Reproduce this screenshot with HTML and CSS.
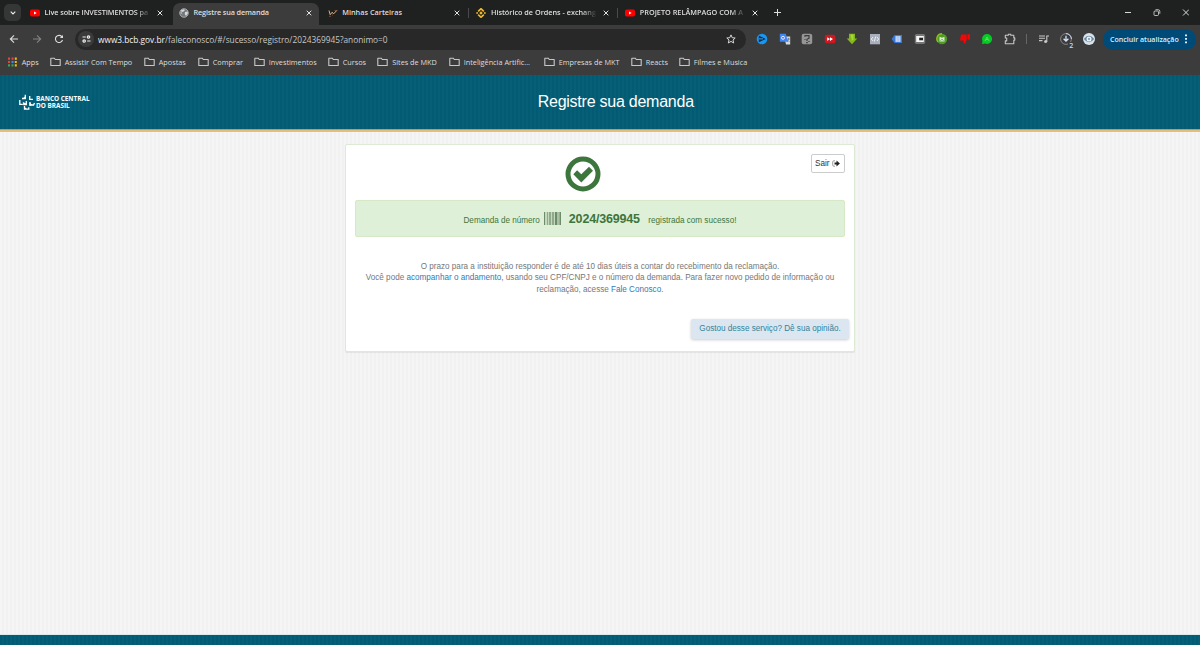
FILE: index.html
```html
<!DOCTYPE html>
<html lang="pt-BR">
<head>
<meta charset="utf-8">
<title>Registre sua demanda</title>
<link rel="stylesheet" href="styles.css">
</head>
<body>
<svg width="0" height="0" class="defs">
  <symbol id="folder" viewBox="0 0 11 10"><path d="M.8 1.2h3.400l1.100 1.300h4.900v6H.8z" fill="none" stroke="#c7c7c7" stroke-width="1.100" stroke-linejoin="round"/></symbol>
  <symbol id="yt" viewBox="0 0 10 8"><rect y=".5" width="10" height="7" rx="1.8" fill="#f00"/><path d="M4 2.5v3L6.700 4z" fill="#fff"/></symbol>
  <symbol id="close" viewBox="0 0 6 6"><path d="M.7.7l4.600 4.600M5.300.7L.7 5.300" stroke="#e3e3e3" stroke-width="1"/></symbol>
</svg>
<div class="tabs">
  <div class="tab-menu"><svg width="6" height="4" viewBox="0 0 6 4"><path d="M.7.7L3 3 5.300.7" fill="none" stroke="#eee" stroke-width="1.100"/></svg></div>
  <div class="tab"><svg class="fav" height="8"><use href="#yt"/></svg><span class="title fade"><b class="t1">Live sobre INVESTIMENTOS pa</b></span><svg class="x"><use href="#close"/></svg></div>
  <div class="tab active"><svg class="fav" viewBox="0 0 10 10"><circle cx="5" cy="5" r="4.3" fill="#73777a" stroke="#b8bec1" stroke-width=".8"/><path d="M2 2.200l3-1 .8 1.300-1.300 1L3 4 1 5l1.700.5.8 1.600zM6 4l2.800-.5v2L7 8 5.700 6z" fill="#d5dadd"/></svg><span class="title"><b class="t2">Registre sua demanda</b></span><svg class="x"><use href="#close"/></svg></div>
  <div class="tab"><svg class="fav" viewBox="0 0 10 10"><path d="M1 2.500l1.200 4.200 2-2.500 1.300 1.700L9 2.300" fill="none" stroke="#d8b484" stroke-width="1"/><path d="M1 8.300h2M4 7h1M6.500 2.500H9" stroke="#9b5941" stroke-width=".7"/></svg><span class="title"><b class="t3">Minhas Carteiras</b></span><svg class="x"><use href="#close"/></svg></div>
  <div class="tab line"><svg class="fav" viewBox="0 0 10 10"><path d="M2.200 3.400L5 .7l2.800 2.700M2.200 6.600L5 9.300l2.800-2.700" fill="none" stroke="#f3ba2f" stroke-width="1.600"/><path d="M5 3.300L6.700 5 5 6.700 3.300 5zM1.100 3.800l1.200 1.200-1.200 1.200L0 5zM8.900 3.800L10 5 8.900 6.200 7.700 5z" fill="#f3ba2f"/></svg><span class="title fade"><b class="t4">Histórico de Ordens - exchang</b></span><svg class="x"><use href="#close"/></svg></div>
  <div class="tab line"><svg class="fav" height="8"><use href="#yt"/></svg><span class="title fade"><b class="t5">PROJETO RELÂMPAGO COM A</b></span><svg class="x"><use href="#close"/></svg></div>
  <div class="new"><svg width="7" height="7" viewBox="0 0 7 7"><path d="M3.500 0v7M0 3.500h7" stroke="#ddd"/></svg></div>
  <div class="win"><svg width="64" height="9" viewBox="0 0 64 9"><path d="M0 4.500h6M58 1.500l6 6M64 1.500l-6 6" stroke="#eee" stroke-width=".9"/><rect x="29" y="3" width="4.500" height="4.500" rx="1" fill="none" stroke="#ddd" stroke-width=".8"/><path d="M30.500 1.700h2.700q1.600 0 1.600 1.600v2.500" fill="none" stroke="#ddd" stroke-width=".8"/></svg></div>
</div>
<div class="toolbar">
  <div class="nav"><svg width="10" height="10" viewBox="0 0 10 10"><path d="M9 5H1.500M5 1.300L1.300 5 5 8.700" fill="none" stroke="#dcdcdc" stroke-width="1.100"/></svg></div>
  <div class="nav"><svg width="10" height="10" viewBox="0 0 10 10"><path d="M1 5h7.500M5 1.300L8.700 5 5 8.700" fill="none" stroke="#838383" stroke-width="1.100"/></svg></div>
  <div class="nav"><svg width="10" height="10" viewBox="0 0 10 10"><path d="M8.500 6A3.600 3.600 0 1 1 7.800 2.600L8.600 3.500" fill="none" stroke="#ddd" stroke-width="1.100"/><path d="M9 .9v3.200H5.800z" fill="#ddd"/></svg></div>
  <div class="address">
    <span class="site"><svg width="9" height="8" viewBox="0 0 9 8"><path d="M.5 2h3.300M5.200 6h3.300" stroke="#eee" stroke-width="1.200"/><circle cx="6.500" cy="2" r="1.200" fill="none" stroke="#eee" stroke-width="1.200"/><circle cx="2.200" cy="6" r="1.200" fill="none" stroke="#eee" stroke-width="1.200"/></svg></span>
    <span class="url"><span class="host">www3.bcb.gov.br</span>/faleconosco/#/sucesso/registro/2024369945?anonimo=0</span>
    <svg class="star" width="10" height="10" viewBox="0 0 10 10"><path d="M5 .9l1.200 2.800 3 .3L7 6l.7 3L5 7.400 2.300 9 3 6 .8 4l3-.3z" fill="none" stroke="#ddd" stroke-width=".95"/></svg>
  </div>
  <div class="exts">
    <svg viewBox="0 0 12 12"><circle cx="6" cy="6" r="5.300" fill="#1796f3"/><path d="M2.800 2.700l6.900 3.200-6.900 3.300z" fill="#10283e"/><path d="M3 5.900h4" stroke="#3fa9f5" stroke-width="1"/></svg>
    <svg viewBox="0 0 12 12"><path d="M5 3.500h6.200v8H7z" fill="#d3d7de"/><path d="M.8.8h6l2 8h-8z" fill="#4285f4"/><path d="M8 6h3M9.500 5v1L8 9M8.500 7l2 2" stroke="#657b92" stroke-width=".7"/><circle cx="4" cy="4.800" r="1.500" fill="none" stroke="#e6edff"/></svg>
    <svg viewBox="0 0 12 12"><rect x=".7" y=".7" width="10.500" height="10.500" rx="2" fill="#969696"/><path d="M4 3.800V2.600h4v2.600L6 6.300V8M5.200 9.700h1.600M3.500 6.500h1M8 8v1" stroke="#3b3b3b" fill="none" stroke-width="1.200"/></svg>
    <svg viewBox="0 0 12 12"><rect x=".8" y="1.800" width="10.600" height="8.400" rx="2" fill="#cf1720"/><path d="M3.200 4.200L6 6 3.200 7.900zM6 4.200L9 6 6 7.900z" fill="#fff"/></svg>
    <svg viewBox="0 0 12 12"><path d="M3 .8h6v4.800h2.300L6 11.200.7 5.600H3z" fill="#83b81a"/><path d="M4.500 1.500h3v4.800L6 8z" fill="#a7d734"/></svg>
    <svg viewBox="0 0 12 12"><path d="M1 1h10v10.300H1z" fill="#a9afbd"/><path d="M4 4L2.300 6 4 8M8 4l1.700 2L8 8M6.700 3.500l-1.400 5" fill="none" stroke="#f6f6fa" stroke-width=".9"/></svg>
    <svg viewBox="0 0 12 12"><path d="M.7 6L3.500 2H11v8H3.500z" fill="#3979db"/><path d="M4.500 3.200h5v5.600h-5z" fill="#d5e4fb"/><path d="M4.500 5h5M4.500 7h5M7 3.200v5.600" stroke="#7ba4e6" stroke-width=".5"/></svg>
    <svg viewBox="0 0 12 12"><rect x=".8" y="1" width="10.400" height="10" rx="1.800" fill="#777"/><rect x="2.200" y="3" width="7.600" height="6" fill="#f6f6f6"/><rect x="5.200" y="4.700" width="3.800" height="2.600" fill="#222"/></svg>
    <svg viewBox="0 0 12 12"><circle cx="6" cy="6" r="5.200" fill="#509b23"/><path d="M2 9A5 5 0 0 1 6 .8" stroke="#8fbb28" fill="none" stroke-width="1.400"/><path d="M3.500 3.700L6 4.800l2.500-1.100v4.800h-5z" fill="#d7ebce"/><path d="M4.500 7.700Q6 4.700 7.500 7.700" stroke="#509b23" fill="none" stroke-width=".8"/></svg>
    <svg viewBox="0 0 12 12"><path d="M2 1.500h5.700v5L6 10.800 4.500 10l.2-2.500H.9zM8.500 1.200H11v5.300H8.500z" fill="#f60505"/></svg>
    <svg viewBox="0 0 12 12"><path d="M1 11l.5-3A5 5 0 1 1 4 10.500z" fill="#05cb25"/><path d="M4 8l2-4 2 4M5 6.500h2" fill="none" stroke="#78dd68" stroke-width=".8"/></svg>
    <svg viewBox="0 0 12 12"><path d="M1.300 2.200h3v-1h2.500v1h3v2.700h1v2.200h-1v3.700H1.300V7.900h1.400V5H1.300z" fill="none" stroke="#c5c5c5" stroke-width="1.100" stroke-linejoin="round"/></svg>
  </div>
  <div class="divider"></div>
  <div class="more">
    <svg viewBox="0 0 12 12"><path d="M1 3h6M1 5.300h6M1 7.600h3.500" stroke="#c7c7c7" stroke-width="1.100"/><path d="M8.800 9V3h2.200" fill="none" stroke="#c7c7c7" stroke-width="1.100"/><circle cx="7.600" cy="8.500" r="1.500" fill="#c7c7c7"/></svg>
    <div class="download"><svg viewBox="0 0 12 12"><circle cx="6" cy="6" r="5.400" fill="none" stroke="#858585"/><path d="M6 .6A5.400 5.400 0 0 1 11.400 6" fill="none" stroke="#cbd9f5"/><path d="M6 2.700v5M3.600 5.700L6 8l2.400-2.300" fill="none" stroke="#d5e2ff" stroke-width="1.300"/></svg><b>2</b></div>
    <svg viewBox="0 0 12 12"><circle cx="6" cy="6" r="6" fill="#d8e2eb"/><path d="M.8 6Q6-.5 11.200 6 6 12.500.8 6z" fill="#6888a2"/><circle cx="6" cy="6" r="2.500" fill="#f2f6fa"/><circle cx="6" cy="6" r="1.200" fill="#93a9ba"/></svg>
  </div>
  <div class="update"><span>Concluir atualização</span><svg width="2" height="10" viewBox="0 0 2 10"><path d="M0 .5h2v1.700H0zM0 4h2v1.700H0zM0 7.500h2v1.700H0z" fill="#dcefff"/></svg></div>
</div>
<div class="bookmarks">
  <div class="bm m0"><svg viewBox="0 0 11 10"><path d="M1 .5h2v2.200H1zM1 3.900h2v2.200H1zM4.500.5h2v2.200h-2z" fill="#ea4335"/><path d="M7.800.5h2v2.200h-2zM7.800 3.900h2v2.200h-2zM7.800 7.300h2v2.200h-2z" fill="#fbbc04"/><path d="M4.500 3.900h2v2.200h-2z" fill="#4285f4"/><path d="M1 7.300h2v2.200H1zM4.500 7.300h2v2.200h-2z" fill="#34a853"/></svg><span>Apps</span></div>
  <div class="bm m1"><svg><use href="#folder"/></svg><span>Assistir Com Tempo</span></div>
  <div class="bm m2"><svg><use href="#folder"/></svg><span>Apostas</span></div>
  <div class="bm m3"><svg><use href="#folder"/></svg><span>Comprar</span></div>
  <div class="bm m4"><svg><use href="#folder"/></svg><span>Investimentos</span></div>
  <div class="bm m5"><svg><use href="#folder"/></svg><span>Cursos</span></div>
  <div class="bm m6"><svg><use href="#folder"/></svg><span>Sites de MKD</span></div>
  <div class="bm m7"><svg><use href="#folder"/></svg><span>Inteligência Artific...</span></div>
  <div class="bm m8"><svg><use href="#folder"/></svg><span>Empresas de MKT</span></div>
  <div class="bm m9"><svg><use href="#folder"/></svg><span>Reacts</span></div>
  <div class="bm m10"><svg><use href="#folder"/></svg><span>Filmes e Musica</span></div>
</div>
<header class="header">
  <div class="brand">
    <svg width="16" height="17" viewBox="0 0 16 17"><g fill="none" stroke="#fff" stroke-width="1.300"><path d="M6.300.8v3.700H3M10.700 2v3.300h3.200M.8 6v4.300h3M7.300 7v3.500H4.500M5.500 12v3.200h4.300v-2M11 8v3h3.500l1-2"/></g><path d="M3.500 4.800L6.500 2v3zM3.800 8l3.500 1.500-3 1.700zM10.500 8l2.500 3-2.500 1zM5 12.500l3 2.500H5z" fill="#fff"/></svg>
    <div>BANCO CENTRAL<br>DO BRASIL</div>
  </div>
  <h1>Registre sua demanda</h1>
</header>
<main>
  <section class="card">
    <div class="top">
      <svg class="check" viewBox="0 0 36 36"><circle cx="18" cy="18" r="15" fill="none" stroke="#3c763d" stroke-width="5"/><path d="M8.300 18.200l3.800-3.900 4.200 4 7.700-7.500 4 3.900-11.700 11.900z" fill="#3c763d"/></svg>
      <button class="exit">Sair <svg width="8" height="7" viewBox="0 0 8 7"><path d="M3 .8H1.800Q.7.8.7 2v3q0 1.200 1.100 1.200H3" fill="none" stroke="#888" stroke-width=".8"/><path d="M2.500 2.400h2V.5l3.400 3-3.400 3V4.600h-2z" fill="#222"/></svg></button>
    </div>
    <div class="alert"><span class="a1">Demanda de número</span><svg width="17" height="13" viewBox="0 0 17 13"><path d="M0 0h17v13H0z" fill="#c4d9bd"/><path d="M0 0h1v13H0zM11 0h2v13h-2zM15.500 0H17v13h-1.500z" fill="#6c8c6b"/><path d="M3 0h1v13H3zM5 0h2v13H5zM8 0h2v13H8zM13.500 0h1v13h-1z" fill="#92aa8c"/></svg><strong>2024/369945</strong><span class="a2">registrada com sucesso!</span></div>
    <div class="message"><p class="p1">O prazo para a instituição responder é de até 10 dias úteis a contar do recebimento da reclamação.</p><p class="p2">Você pode <a>acompanhar o andamento</a>, usando seu CPF/CNPJ e o número da demanda. Para fazer novo pedido de informação ou</p><p class="p3">reclamação, acesse <a>Fale Conosco</a>.</p></div>
    <div class="feedback"><span>Gostou desse serviço? Dê sua opinião.</span></div>
  </section>
</main>
<footer></footer>
</body>
</html>
```

FILE: styles.css
```css
* { box-sizing: border-box; }
body { margin: 0; width: 1200px; height: 645px; overflow: hidden; display: flex; flex-direction: column; font-family: "Liberation Sans", Arial, sans-serif; background: #f3f3f3; }
svg { display: block; flex: none; }
.defs { display: none; }
.tabs, .toolbar, .bookmarks { display: flex; align-items: center; flex: none; white-space: nowrap; font-family: "Open Sans", "Noto Sans", sans-serif; font-size: 7.3px; color: #dedede; }
.tabs { height: 25px; background: #1f2020; padding-left: 4px; }
.tab-menu { width: 17px; height: 17px; border-radius: 5px; background: #353636; display: grid; place-items: center; margin-right: 3.6px; }
.tab { width: 148.8px; height: 25px; padding: 0 10.5px 0 5.5px; display: flex; align-items: center; }
.tab.active { background: #3c3c3c; border-radius: 7px 7px 0 0; height: 22px; margin-top: 3px; width: 145.8px; padding-right: 7.5px; padding-bottom: 3px; margin-right: 3px; }
.tab.line { background: linear-gradient(#4a4a4a, #4a4a4a) 0 8px / 1px 10px no-repeat; margin-left: -3px; padding-left: 8.5px; width: 151.8px; }
.fav { width: 10px; height: 10px; }
.tab .fav[height] { height: 8px; }
.title { width: 107px; margin-left: 4.5px; padding-bottom: 1px; }
.title b { font-weight: 600; }
.t1 { letter-spacing: -0.08px; }
.t2 { letter-spacing: -0.14px; }
.t4 { letter-spacing: -0.02px; }
.fade { -webkit-mask-image: linear-gradient(90deg, #000 85%, transparent 99%); mask-image: linear-gradient(90deg, #000 85%, transparent 99%); }
.x { width: 6px; height: 6px; margin-left: auto; }
.new { margin-left: 5px; }
.win { margin-left: auto; padding-right: 11px; }
.toolbar { height: 28px; background: #3c3c3c; padding: 0 4px 0 3px; }
.nav { width: 22.5px; height: 22px; display: grid; place-items: center; }
.address { width: 671px; height: 21px; margin-left: 4.5px; border-radius: 11px; background: #282828; display: flex; align-items: center; }
.site { width: 16px; height: 16px; border-radius: 50%; background: #3b3b3b; margin-left: 3px; display: grid; place-items: center; }
.url { font-size: 8.32px; color: #c7c7c7; margin-left: 4px; }
.host { color: #f5f5f5; }
.star { margin-left: auto; margin-right: 10px; }
.exts { display: flex; margin-left: 5px; }
.exts svg { width: 12px; height: 12px; margin: 0 5.25px; }
.divider { width: 1px; height: 10px; background: #666; margin: 0 10.7px 0 5px; }
.more { display: flex; gap: 10.6px; }
.more svg { width: 12px; height: 12px; }
.download { position: relative; }
.download b { position: absolute; right: -1px; bottom: -4px; font: 600 7px/7px "Open Sans", sans-serif; color: #cbd9ef; background: #3c3c3c; padding-left: 1px; }
.update { width: 93px; height: 21px; border-radius: 11px; margin-left: auto; background: #004a77; color: #d9efff; font-weight: 600; display: flex; align-items: center; justify-content: space-between; padding: 0 9px 0 7px; }
.update span { font-size: 7.05px; }
.bookmarks { height: 22px; padding: 0 0 4px 6.7px; background: #3c3c3c; }
.bm { display: flex; align-items: center; gap: 4px; font-weight: 500; }
.bm svg { width: 11px; height: 10px; }
.m0 { width: 43px; }
.m1 { width: 94px; }
.m2 { width: 54px; }
.m3 { width: 56px; }
.m4 { width: 74px; }
.m5 { width: 49.5px; }
.m6 { width: 71.5px; }
.m7 { width: 95px; }
.m8 { width: 87px; }
.m9 { width: 48px; }
.header { height: 57px; flex: none; background: repeating-linear-gradient(90deg, #025b73 0 2px, #055f77 2px 4px); border-bottom: 2px solid #e8bd78; box-shadow: inset 0 -1px #84a99e; display: grid; grid-template-columns: 1fr auto 1fr; align-items: center; color: #fff; }
.brand { display: flex; gap: 1px; margin-left: 19px; font: 700 6.4px/6.7px "Open Sans", sans-serif; white-space: nowrap; }
.brand div { padding-top: 2px; }
h1 { grid-column: 2; margin: 0 0 2px 31.5px; font-weight: 400; font-size: 16px; letter-spacing: -0.24px; line-height: 20px; white-space: nowrap; }
main { flex: 1; padding-top: 12px; background: repeating-linear-gradient(90deg, #f5f5f5 0 2px, #f1f1f1 2px 4px); border-bottom: 1px solid #dceaea; }
.card { width: 510px; height: 208px; margin: 0 auto; border: 1px solid #dce9d3; border-radius: 2px; background: #fff; padding: 9px; box-shadow: 0 1px 1px #0001; white-space: nowrap; }
.top { display: flex; height: 46px; padding-top: 2px; }
.check { width: 36px; height: 36px; margin-left: 210px; }
.exit { width: 34px; height: 19px; margin-left: auto; margin-top: -2px; padding: 0 4px 0 3px; background: #fff; border: 1px solid #ccc; border-radius: 2px; font: 8.2px "Liberation Sans", sans-serif; color: #333; display: flex; align-items: center; justify-content: space-between; }
.alert { height: 37px; background: #dff0d8; border: 1px solid #d6e9c6; border-radius: 2px; color: #3c763d; font-size: 8.15px; display: flex; align-items: center; padding-left: 107.5px; }
.alert svg { margin-left: 4px; margin-right: 8px; }
.alert strong { font-size: 12.5px; letter-spacing: -0.18px; width: 79.5px; }
.alert span { padding-top: 3px; }
.message { margin-top: 23.5px; text-align: center; font-size: 8.15px; line-height: 11.7px; color: #777; }
.message p { margin: 0; }
.message a { color: #337ab7; }
.feedback { width: 158px; height: 20px; margin: 23px -4px 0 auto; border-radius: 2px; background: #dce6f0; box-shadow: 0 1px 3px #0003; color: #31849b; font-size: 8.15px; display: grid; place-items: center; }
footer { height: 10px; flex: none; background: repeating-linear-gradient(90deg, #025b73 0 2px, #055f77 2px 4px); }
```
